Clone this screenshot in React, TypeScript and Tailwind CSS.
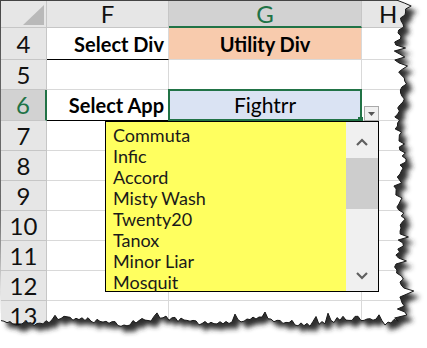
import React from "react";

const ITEMS = ["Commuta", "Infic", "Accord", "Misty Wash", "Twenty20", "Tanox", "Minor Liar", "Mosquit"];

const ROWS = [
  { n: "4", h: "h-[32px]" },
  { n: "5", h: "h-[30px]" },
  { n: "6", h: "h-[31px]" },
  { n: "7", h: "h-[30px]" },
  { n: "8", h: "h-[30px]" },
  { n: "9", h: "h-[30px]" },
  { n: "10", h: "h-[30px]" },
  { n: "11", h: "h-[30px]" },
  { n: "12", h: "h-[30px]" },
  { n: "13", h: "h-[30px]" },
];

// jagged "torn paper" edge along right and bottom
function tornEdge() {
  let seed = 41;
  const r = () => {
    seed = (seed * 16807) % 2147483647;
    return seed / 2147483647;
  };
  const pts: [number, number][] = [];
  for (let y = 0; y <= 322; y += 3) {
    let x = 400 + 3.5 * Math.sin(y / 11) + (r() - 0.5) * 7;
    if (r() > 0.92) x += 7;
    pts.push([x, y]);
  }
  for (let x = 394; x >= 0; x -= 3) {
    let y = 321 + 3 * Math.sin(x / 15) + (r() - 0.5) * 5;
    if (r() > 0.92) y -= 6;
    pts.push([x, y]);
  }
  return pts;
}

const EDGE = tornEdge();
const edgeLine = "M" + EDGE.map(([x, y]) => `${x.toFixed(1)},${y.toFixed(1)}`).join(" L");
const inside = edgeLine + " L0,0 Z";
const outside = "M0,0 H427 V348 H0 Z " + inside;
const shifted =
  "M" + EDGE.map(([x, y]) => `${(x + 6).toFixed(1)},${(y + 6).toFixed(1)}`).join(" L") + " L-20,-20 Z";

function Torn() {
  return (
    <svg className="absolute inset-0 pointer-events-none" width={427} height={348}>
      <defs>
        <filter id="blur" x="-10%" y="-10%" width="120%" height="120%">
          <feGaussianBlur stdDeviation="2.4" />
        </filter>
        <clipPath id="out">
          <path d={outside} clipRule="evenodd" />
        </clipPath>
      </defs>
      <path d={outside} fill="#fff" fillRule="evenodd" />
      <g clipPath="url(#out)">
        <path d={shifted} fill="#2e2e2e" filter="url(#blur)" />
      </g>
      <path d={edgeLine} fill="none" stroke="#1a1a1a" strokeWidth={1} />
    </svg>
  );
}

export default function App() {
  const head = "bg-[#e6e6e6] border-r border-b border-[#c6c6c6] flex items-center justify-center text-[24px] text-[#111]";
  const cell = "border-r border-b border-[#d9d9d9]";

  return (
    <div className="relative w-[427px] h-[348px] overflow-hidden bg-white" style={{ fontFamily: "Lato, 'Open Sans', sans-serif" }}>
      <div className="border-t border-l border-[#444] grid grid-cols-[46px_122px_193px_65px]">
        {/* header row */}
        <div className={`${head} h-[27px] relative`}>
          <svg className="absolute left-[22px] top-[4px]" width={21} height={20}>
            <polygon points="21,0 21,20 0,20" fill="#b9b9b9" />
          </svg>
        </div>
        <div className={`${head} h-[27px]`}>F</div>
        <div className="h-[27px] bg-[#d2d2d2] border-r border-[#c6c6c6] border-b-2 border-b-[#217346] flex items-center justify-center text-[24px] text-[#217346]">
          G
        </div>
        <div className={`${head} h-[27px] justify-start pl-[17px]`}>H</div>

        {ROWS.map((row) => {
          const sel = row.n === "6";
          return (
            <React.Fragment key={row.n}>
              <div
                className={`${row.h} border-b border-[#c6c6c6] flex items-center justify-center text-[24px] ${
                  sel ? "bg-[#d2d2d2] text-[#217346] border-r-2 border-r-[#217346]" : "bg-[#e6e6e6] text-[#111] border-r"
                }`}
              >
                {row.n}
              </div>
              {row.n === "4" ? (
                <>
                  <div className={`${row.h} border-r border-[#d9d9d9] border-b border-b-black flex items-center justify-end pr-[4px] text-[20px] font-bold`}>
                    Select Div
                  </div>
                  <div className={`${row.h} ${cell} bg-[#f8cbad] flex items-center justify-center text-[20px] font-bold`}>
                    Utility Div
                  </div>
                </>
              ) : sel ? (
                <>
                  <div className={`${row.h} border-r border-[#d9d9d9] border-b border-b-black flex items-center justify-end pr-[4px] text-[20px] font-bold`}>
                    Select App
                  </div>
                  <div className="h-[32px] relative border-2 border-[#217346] bg-[#dae3f3] flex items-center justify-center text-[21px] ml-[-1px] mt-[-1px]">
                    Fightrr
                    <div className="absolute right-[-3px] bottom-[-3px] w-[5px] h-[5px] bg-[#217346]" />
                  </div>
                </>
              ) : (
                <>
                  <div className={`${row.h} ${cell}`} />
                  <div className={`${row.h} ${cell}`} />
                </>
              )}
              <div className={`${row.h} ${cell}`} />
            </React.Fragment>
          );
        })}
      </div>

      {/* dropdown button */}
      <div className="absolute left-[364px] top-[106px] w-[15px] h-[15px] bg-[#f0f0f0] border border-[#a9a9a9] flex items-center justify-center">
        <svg width={7} height={4}>
          <polygon points="0,0 7,0 3.5,4" fill="#555" />
        </svg>
      </div>

      {/* dropdown list */}
      <div className="absolute left-[105px] top-[121px] w-[274px] h-[171px] border border-black flex">
        <div className="flex-1 bg-[#ffff5f] pt-[3px] pl-[7px] text-[18px] leading-[21px] text-[#1a1a1a]">
          {ITEMS.map((it) => (
            <div key={it}>{it}</div>
          ))}
        </div>
        <div className="w-[32px] bg-[#f0f0f0] flex flex-col">
          <div className="h-[36px] flex items-center justify-center pt-[4px]">
            <svg width={12} height={8}>
              <polyline points="1,7 6,2 11,7" fill="none" stroke="#606060" strokeWidth={2.2} />
            </svg>
          </div>
          <div className="h-[51px] bg-[#cdcdcd]" />
          <div className="flex-1 flex items-end justify-center pb-[11px]">
            <svg width={12} height={8}>
              <polyline points="1,1 6,6 11,1" fill="none" stroke="#606060" strokeWidth={2.2} />
            </svg>
          </div>
        </div>
      </div>

      <Torn />
    </div>
  );
}
